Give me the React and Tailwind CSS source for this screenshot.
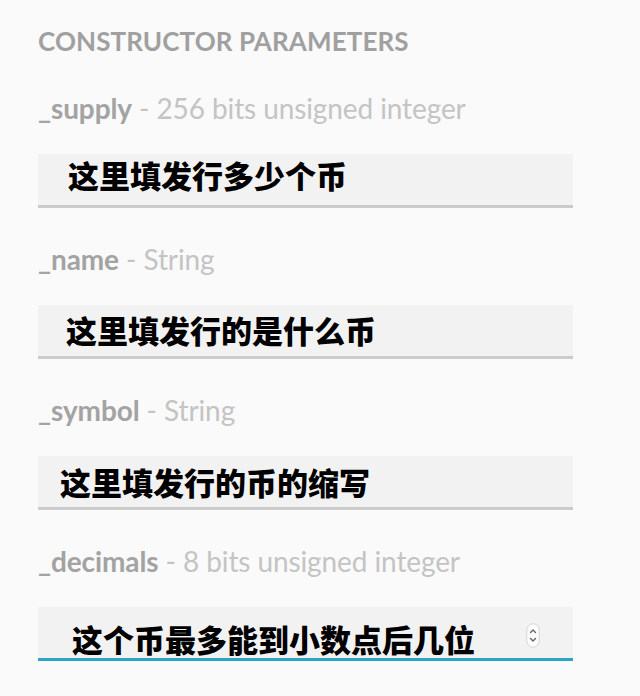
import React from "react";

function Spinner() {
  return (
    <svg width="14" height="25" viewBox="0 0 14 25" className="shrink-0">
      <rect x="0.75" y="0.75" width="12.5" height="23.5" rx="6.25" fill="#fcfcfc" stroke="#d4d4d4" strokeWidth="1" />
      <path d="M4.5 9.5 L7 7 L9.5 9.5" fill="none" stroke="#666" strokeWidth="1.4" strokeLinecap="round" strokeLinejoin="round" />
      <path d="M4.5 15.5 L7 18 L9.5 15.5" fill="none" stroke="#666" strokeWidth="1.4" strokeLinecap="round" strokeLinejoin="round" />
    </svg>
  );
}

function Field({ name, type, value, pl, pt, active, spinner }) {
  return (
    <div className="flex flex-col">
      <div className="h-[26px] flex items-center text-[28px] leading-none tracking-[-0.1px]">
        <span className="font-bold text-[#a3a3a3]">{name}</span>
        <span className="text-[#c4c4c4]">&nbsp;- {type}</span>
      </div>
      <div
        className={
          "mt-[33px] h-[54px] bg-[#f3f2f2] flex items-start border-b-[3px] " +
          (active ? "border-[#2ba4c6]" : "border-[#cbcbcb]")
        }
      >
        <div
          className={"flex-1 text-[31px] leading-none font-black text-black " + pl + " " + pt}
          style={{ fontFamily: '"Noto Sans CJK SC", "Noto Sans", sans-serif' }}
        >
          {value}
        </div>
        {spinner && (
          <div className="pr-[33px] pt-[16px]">
            <Spinner />
          </div>
        )}
      </div>
    </div>
  );
}

export default function App() {
  return (
    <div
      className="w-[640px] h-[696px] bg-[#fafafa] overflow-hidden"
      style={{ fontFamily: 'Lato, "Open Sans", sans-serif' }}
    >
      <div className="pl-[38px] w-[573px] pt-[28px] flex flex-col">
        <div className="text-[26px] leading-none font-bold text-[#a0a0a0] tracking-[0.1px] h-[26px]">
          CONSTRUCTOR PARAMETERS
        </div>
        <div className="flex flex-col gap-[38px] mt-[41px]">
          <Field name="_supply" type="256 bits unsigned integer" value="这里填发行多少个币" pl="pl-[30px]" pt="pt-[5px]" />
          <Field name="_name" type="String" value="这里填发行的是什么币" pl="pl-[28px]" pt="pt-[9px]" />
          <Field name="_symbol" type="String" value="这里填发行的币的缩写" pl="pl-[22px]" pt="pt-[10px]" />
          <Field name="_decimals" type="8 bits unsigned integer" value="这个币最多能到小数点后几位" pl="pl-[34px]" pt="pt-[16px]" active spinner />
        </div>
      </div>
    </div>
  );
}
